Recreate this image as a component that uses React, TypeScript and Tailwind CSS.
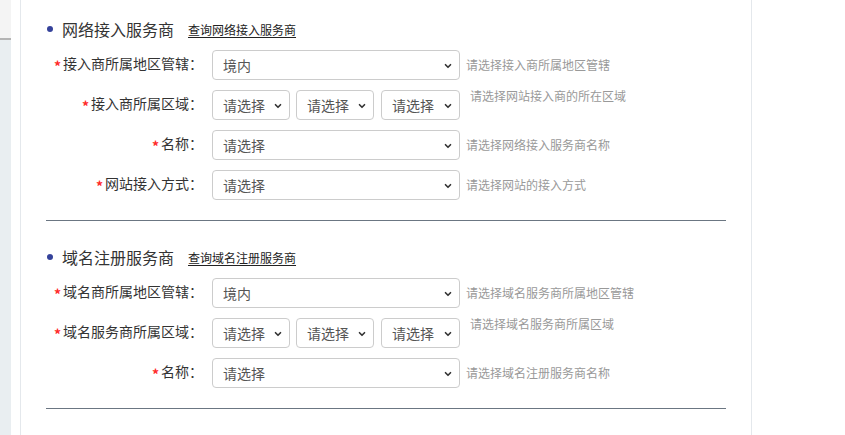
import { ChevronDown } from "lucide-react"

const FONT = { fontFamily: '"Microsoft YaHei", "Noto Sans CJK SC", "Noto Sans", sans-serif' }

function Select({ value, width }: { value: string; width: string }) {
  return (
    <div className={`relative h-[30px] ${width} shrink-0 rounded-[4px] border border-[#cccccc] bg-white`}>
      <div className="pl-[10px] text-[14px] leading-[28px] text-[#555555]">{value}</div>
      <ChevronDown
        className="absolute right-[6px] top-[10px] h-[10px] w-[10px] text-[#333333]"
        strokeWidth={4}
      />
    </div>
  )
}

function Label({ text }: { text: string }) {
  return (
    <div className="flex h-[30px] w-[159px] shrink-0 items-center justify-end pr-[2px] text-[14px] text-[#333333]">
      <span className="mr-[2px] mt-[3px] text-[14px] font-bold text-[#ff2a2a]">*</span>
      <span className="-mt-[4px]">{text}</span>
    </div>
  )
}

function Row({
  label,
  hint,
  value = "请选择",
  multi,
}: {
  label: string
  hint: string
  value?: string
  multi?: boolean
}) {
  return (
    <div className="flex items-start">
      <Label text={label} />
      <div className="ml-[7px] flex">
        {multi ? (
          <>
            <Select value="请选择" width="w-[78px]" />
            <div className="ml-[6px]">
              <Select value="请选择" width="w-[78px]" />
            </div>
            <div className="ml-[7px]">
              <Select value="请选择" width="w-[79px]" />
            </div>
          </>
        ) : (
          <Select value={value} width="w-[248px]" />
        )}
      </div>
      {multi ? (
        <div className="-mt-[2px] ml-[10px] text-[12px] leading-[16px] text-[#999999]">{hint}</div>
      ) : (
        <div className="ml-[6px] text-[12px] leading-[30px] text-[#999999]">{hint}</div>
      )}
    </div>
  )
}

function Header({ title, link }: { title: string; link: string }) {
  return (
    <div className="flex h-[22px] items-center">
      <span className="ml-[1px] h-[6px] w-[6px] rounded-full bg-[#35429a]" />
      <span className="ml-[9px] text-[16px] leading-[22px] text-[#333333]">{title}</span>
      <span className="ml-[14px] mt-[2px] text-[12px] leading-[16px] text-[#222222] underline underline-offset-2">
        {link}
      </span>
    </div>
  )
}

export default function App() {
  return (
    <div className="flex h-[435px] w-[845px] overflow-hidden bg-white" style={FONT}>
      {/* left strip */}
      <div className="flex w-[11px] shrink-0 flex-col">
        <div className="h-[38px] bg-[#f4f4f4]" />
        <div className="h-[2px] bg-[#b4b4b4]" />
        <div className="flex-1 bg-[#e9eef1]" />
      </div>
      <div className="w-[9px] shrink-0 bg-white" />

      <div className="w-[732px] shrink-0 border-x border-[#e4e8ec] pl-[25px] pt-[18px]">
        <Header title="网络接入服务商" link="查询网络接入服务商" />
        <div className="mt-[10px] flex flex-col gap-[10px]">
          <Row label="接入商所属地区管辖：" hint="请选择接入商所属地区管辖" value="境内" />
          <Row label="接入商所属区域：" hint="请选择网站接入商的所在区域" multi />
          <Row label="名称：" hint="请选择网络接入服务商名称" />
          <Row label="网站接入方式：" hint="请选择网站的接入方式" />
        </div>
        <div className="mt-[20px] h-px w-[680px] bg-[#6b7682]" />

        <div className="mt-[25px]">
          <Header title="域名注册服务商" link="查询域名注册服务商" />
        </div>
        <div className="mt-[10px] flex flex-col gap-[10px]">
          <Row label="域名商所属地区管辖：" hint="请选择域名服务商所属地区管辖" value="境内" />
          <Row label="域名服务商所属区域：" hint="请选择域名服务商所属区域" multi />
          <Row label="名称：" hint="请选择域名注册服务商名称" />
        </div>
        <div className="mt-[20px] h-px w-[680px] bg-[#6b7682]" />
      </div>

      <div className="flex-1 bg-white" />
    </div>
  )
}
